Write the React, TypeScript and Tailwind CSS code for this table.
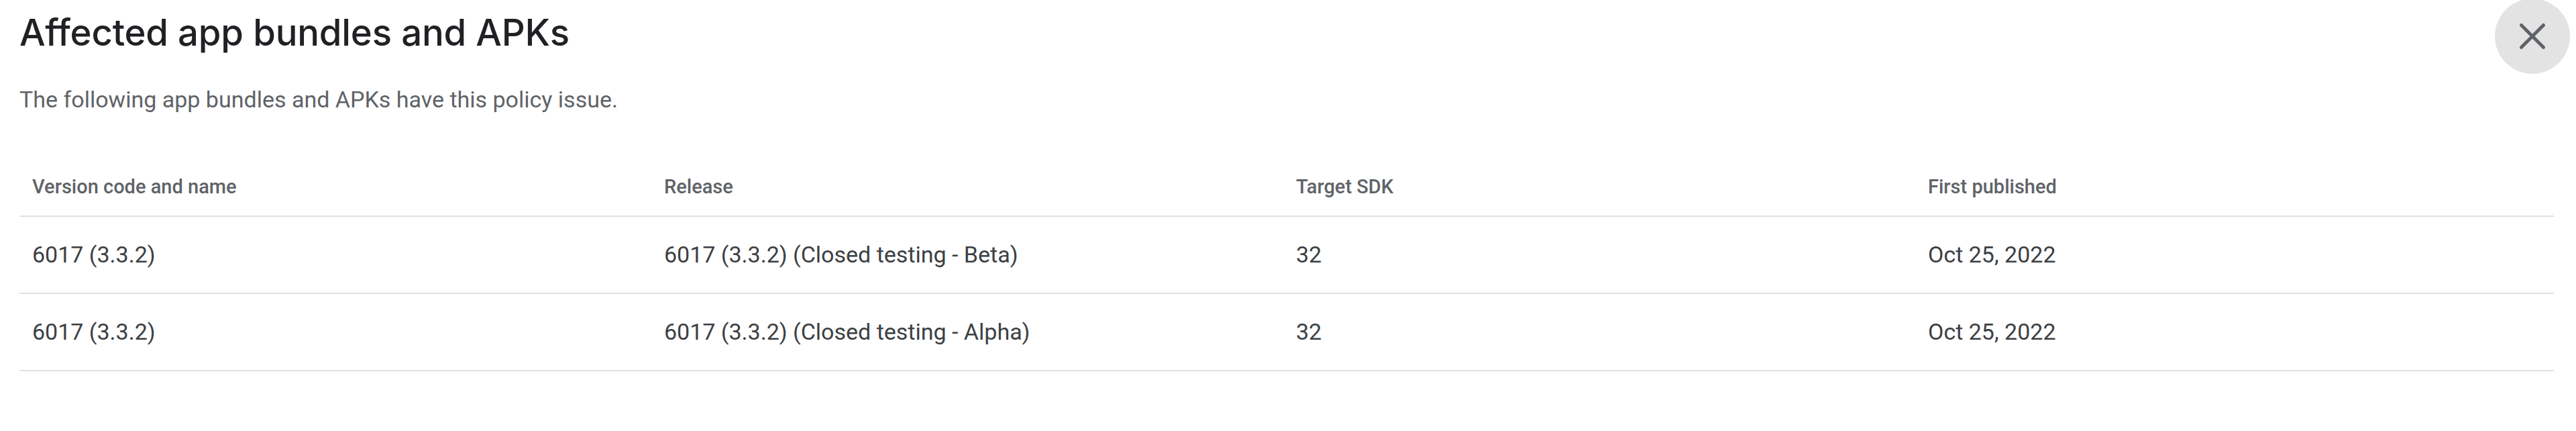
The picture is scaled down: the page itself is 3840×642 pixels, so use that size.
import { X } from 'lucide-react'

const ROWS = [
  { version: '6017 (3.3.2)', release: '6017 (3.3.2) (Closed testing - Beta)', sdk: '32', published: 'Oct 25, 2022' },
  { version: '6017 (3.3.2)', release: '6017 (3.3.2) (Closed testing - Alpha)', sdk: '32', published: 'Oct 25, 2022' },
]

const HEADERS = ['Version code and name', 'Release', 'Target SDK', 'First published']

export default function App() {
  return (
    <div className="min-h-[642px] w-full bg-white pl-[29px] pr-[33px]">
      {/* Header */}
      <div className="flex items-start justify-between">
        <h1
          className="pt-[8px] text-[54.5px] font-medium leading-[80px] tracking-[-0.2px] text-[#202124]"
          style={{ fontFamily: 'Inter, "Noto Sans", sans-serif' }}
        >
          Affected app bundles and APKs
        </h1>
        <button className="-mr-[24px] -mt-[2px] flex h-[112px] w-[112px] items-center justify-center rounded-full bg-[#e3e3e3] text-[#5f6368]">
          <X size={66} strokeWidth={1.8} />
        </button>
      </div>

      <p className="mt-[14px] font-['Roboto',sans-serif] text-[34px] leading-[48px] text-[#5f6368]">
        The following app bundles and APKs have this policy issue.
      </p>

      {/* Table */}
      <div className="mt-[61px] font-['Roboto',sans-serif]">
        <div className="grid h-[90px] grid-cols-[942px_942px_942px_1fr] items-center border-b-2 border-[#e0e0e0]">
          {HEADERS.map((h) => (
            <div key={h} className="pl-[19px] pt-[4px] text-[29px] font-medium text-[#5f6368]">{h}</div>
          ))}
        </div>
        {ROWS.map((r, i) => (
          <div key={i} className="grid h-[115px] grid-cols-[942px_942px_942px_1fr] items-center border-b-2 border-[#e0e0e0] text-[34px] text-[#3c4043]">
            <div className="pl-[19px]">{r.version}</div>
            <div className="pl-[19px]">{r.release}</div>
            <div className="pl-[19px]">{r.sdk}</div>
            <div className="pl-[19px]">{r.published}</div>
          </div>
        ))}
      </div>
    </div>
  )
}
